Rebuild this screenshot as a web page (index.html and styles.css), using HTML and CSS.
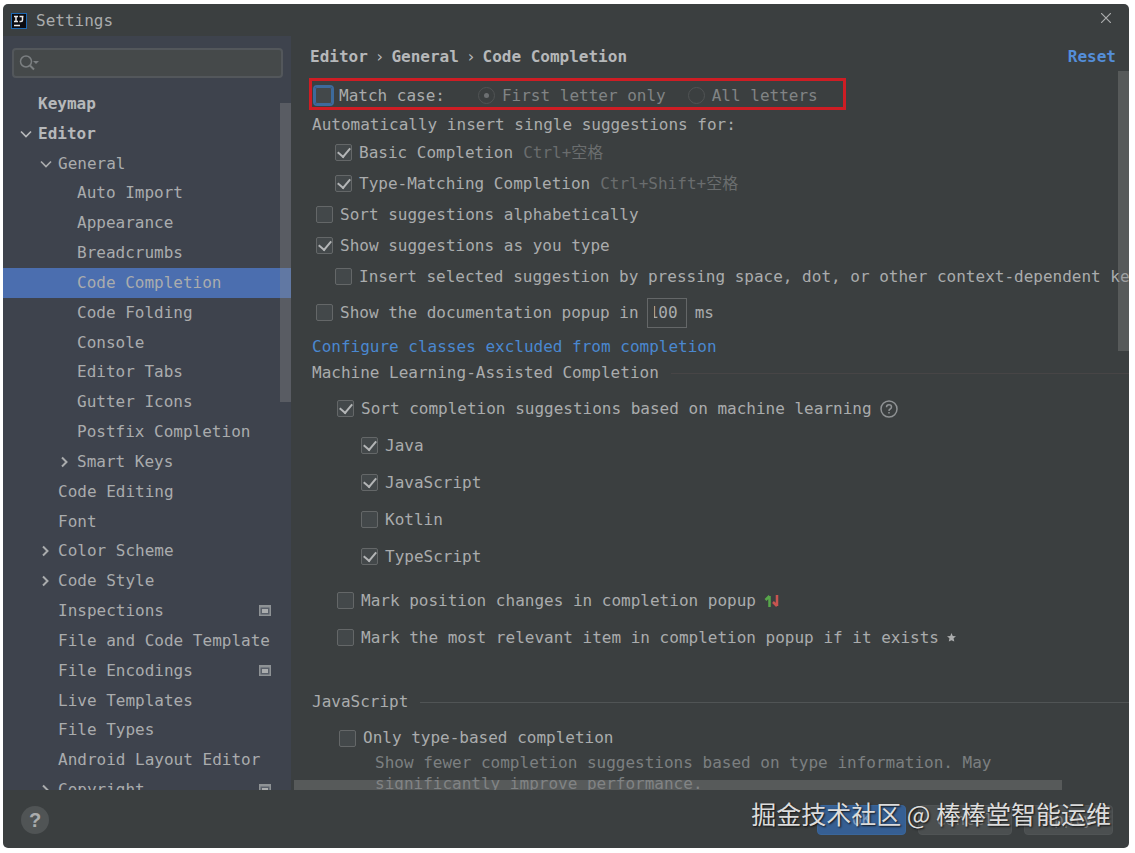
FILE: index.html
```html
<!DOCTYPE html>
<html lang="en">

<head>
    <meta charset="UTF-8">
    <meta name="viewport" content="width=device-width, initial-scale=1.0">
    <title>Settings</title>
    <link rel="stylesheet" href="styles.css">
</head>

<body>
    <!-- shared icons -->
    <svg class="sprite" aria-hidden="true">
        <symbol id="right" viewBox="0 0 16 16">
            <path d="M5 3.500l4.500 4.500L5 12.500" fill="none" stroke="currentColor" stroke-width="2" />
        </symbol>
        <symbol id="down" viewBox="0 0 16 16">
            <path d="M3 5.500l5 5 5-5" fill="none" stroke="currentColor" stroke-width="1.700" />
        </symbol>
        <symbol id="project" viewBox="0 0 12 12">
            <path d="M0 0h12v11H0z" fill="currentColor" fill-opacity=".75" />
            <path d="M1.500 2.500h9v7h-9z" fill="#5a606a" />
            <path d="M3 4h6v4H3z" fill="currentColor" />
        </symbol>
    </svg>

    <div class="dialog">
        <header class="titlebar">
            <svg class="logo" viewBox="0 0 16 16" aria-hidden="true">
                <rect width="16" height="16" fill="#1d68b3" />
                <rect x="1" y="1" width="14" height="14" fill="#0b0b10" />
                <path d="M3 3.500h4M5 3.500v5M3 8.500h4M8.500 3.500h4M11.500 3.500v3.500q0 1.500-1.500 1.500H8.500M3 12.500h6" fill="none" stroke="#e8e8e8" stroke-width="1.500" />
            </svg>
            <span>Settings</span>
            <button class="close" aria-label="Close">
                <svg viewBox="0 0 10 10"><path d="M0 0l10 10M10 0L0 10" stroke="currentColor" stroke-width="1.200" /></svg>
            </button>
        </header>

        <div class="body">
            <nav class="sidebar">
                <label class="search">
                    <svg viewBox="0 0 22 18" aria-hidden="true">
                        <circle cx="7" cy="7.500" r="5.500" fill="none" stroke="currentColor" stroke-width="1.500" />
                        <path d="M11 11.500l4 4" stroke="currentColor" stroke-width="2" />
                        <path d="M14 7h6l-3 3z" fill="currentColor" />
                    </svg>
                    <input type="text" aria-label="Search settings">
                </label>
                <ul class="tree">
                    <li><a class="top" href="#"><i></i>Keymap</a></li>
                    <li><a class="top" href="#"><svg><use href="#down" /></svg>Editor</a></li>
                    <li><a class="group" href="#"><svg><use href="#down" /></svg>General</a></li>
                    <li><a class="leaf" href="#"><i></i>Auto Import</a></li>
                    <li><a class="leaf" href="#"><i></i>Appearance</a></li>
                    <li><a class="leaf" href="#"><i></i>Breadcrumbs</a></li>
                    <li><a class="leaf selected" href="#"><i></i>Code Completion</a></li>
                    <li><a class="leaf" href="#"><i></i>Code Folding</a></li>
                    <li><a class="leaf" href="#"><i></i>Console</a></li>
                    <li><a class="leaf" href="#"><i></i>Editor Tabs</a></li>
                    <li><a class="leaf" href="#"><i></i>Gutter Icons</a></li>
                    <li><a class="leaf" href="#"><i></i>Postfix Completion</a></li>
                    <li><a class="leaf" href="#"><svg><use href="#right" /></svg>Smart Keys</a></li>
                    <li><a class="group" href="#"><i></i>Code Editing</a></li>
                    <li><a class="group" href="#"><i></i>Font</a></li>
                    <li><a class="group" href="#"><svg><use href="#right" /></svg>Color Scheme</a></li>
                    <li><a class="group" href="#"><svg><use href="#right" /></svg>Code Style</a></li>
                    <li><a class="group" href="#"><i></i>Inspections<svg class="project"><use href="#project" /></svg></a></li>
                    <li><a class="group" href="#"><i></i>File and Code Template</a></li>
                    <li><a class="group" href="#"><i></i>File Encodings<svg class="project"><use href="#project" /></svg></a></li>
                    <li><a class="group" href="#"><i></i>Live Templates</a></li>
                    <li><a class="group" href="#"><i></i>File Types</a></li>
                    <li><a class="group" href="#"><i></i>Android Layout Editor</a></li>
                    <li><a class="group" href="#"><svg><use href="#right" /></svg>Copyright<svg class="project"><use href="#project" /></svg></a></li>
                </ul>
                <div class="thumb tree-thumb"></div>
            </nav>

            <main class="content">
                <div class="crumbs">
                    <span>Editor</span><span class="sep">›</span><span>General</span><span class="sep">›</span><span>Code Completion</span>
                    <a class="reset" href="#">Reset</a>
                </div>

                <div class="match">
                    <label><input class="focused" type="checkbox">Match case:</label>
                    <label class="disabled first"><input type="radio" name="match" checked disabled>First letter only</label>
                    <label class="disabled"><input type="radio" name="match" disabled>All letters</label>
                </div>

                <p class="caption">Automatically insert single suggestions for:</p>
                <div class="rows">
                    <label class="indent"><input type="checkbox" checked>Basic Completion <kbd>Ctrl+空格</kbd></label>
                    <label class="indent"><input type="checkbox" checked>Type-Matching Completion <kbd>Ctrl+Shift+空格</kbd></label>
                    <label><input type="checkbox">Sort suggestions alphabetically</label>
                    <label><input type="checkbox" checked>Show suggestions as you type</label>
                    <label class="indent"><input type="checkbox">Insert selected suggestion by pressing space, dot, or other context-dependent keys</label>
                </div>
                <div class="delay">
                    <label><input type="checkbox">Show the documentation popup in</label>
                    <input type="text" value="100" aria-label="Delay in milliseconds">
                    <span>ms</span>
                </div>
                <a class="configure" href="#">Configure classes excluded from completion</a>

                <h2 class="faint">Machine Learning-Assisted Completion</h2>
                <div class="rows ml">
                    <label>
                        <input type="checkbox" checked>Sort completion suggestions based on machine learning
                        <svg class="hint" viewBox="0 0 18 18" aria-hidden="true">
                            <circle cx="9" cy="9" r="8" fill="none" stroke="currentColor" stroke-width="1.500" />
                            <path d="M6.500 7.200q0-2.400 2.500-2.400t2.500 2.200q0 1.200-1.300 2-1.200.7-1.200 2M9 12v1.600" fill="none" stroke="currentColor" stroke-width="1.500" />
                        </svg>
                    </label>
                    <label class="lang"><input type="checkbox" checked>Java</label>
                    <label class="lang"><input type="checkbox" checked>JavaScript</label>
                    <label class="lang"><input type="checkbox">Kotlin</label>
                    <label class="lang"><input type="checkbox" checked>TypeScript</label>
                </div>
                <div class="rows ml marks">
                    <label>
                        <input type="checkbox">Mark position changes in completion popup
                        <svg class="updown" viewBox="0 0 16 14" aria-hidden="true">
                            <path d="M5.500 13V2M1.500 6l4-4" fill="none" stroke="#57a64a" stroke-width="2.500" />
                            <path d="M13 1v11M9 8l4 4" fill="none" stroke="#c75450" stroke-width="2.500" />
                        </svg>
                    </label>
                    <label>
                        <input type="checkbox">Mark the most relevant item in completion popup if it exists
                        <svg class="star" viewBox="0 0 10 10" aria-hidden="true">
                            <path d="M5 0l1.400 3.200 3.600.4-2.700 2.300.8 3.600L5 8 2 9.500l.7-3.600L0 3.600l3.600-.4z" fill="currentColor" />
                        </svg>
                    </label>
                </div>

                <h2>JavaScript</h2>
                <div class="rows js">
                    <label><input type="checkbox">Only type-based completion</label>
                    <p>Show fewer completion suggestions based on type information. May<br>significantly improve performance.</p>
                </div>

                <div class="thumb page-thumb"></div>
                <div class="thumb bottom-thumb"></div>
            </main>
        </div>

        <footer class="footer">
            <button class="help" aria-label="Help">?</button>
            <button class="btn primary">OK</button>
            <button class="btn">Cancel</button>
            <button class="btn">Apply</button>
            <div class="watermark">掘金技术社区 @ 棒棒堂智能运维</div>
        </footer>
    </div>
</body>

</html>
```

FILE: styles.css
```css
* {
    box-sizing: border-box;
}

body {
    margin: 0;
    padding: 4px 6px 5px 3px;
    background-color: #fff;
    color: #aaacad;
    font-family: "DejaVu Sans Mono", "Noto Sans CJK SC", monospace;
    font-size: 16px;
    line-height: 20px;
}

a {
    color: inherit;
    text-decoration: none;
}

button,
input {
    font: inherit;
    color: inherit;
}

.sprite {
    display: none;
}

.dialog {
    display: flex;
    flex-direction: column;
    height: calc(100vh - 9px);
    border-radius: 5px;
    overflow: hidden;
    background-color: #3b3f40;
}

/* title bar */
.titlebar {
    display: flex;
    align-items: center;
    gap: 9px;
    height: 32px;
    padding: 1px 18px 0 8px;
}

.logo {
    width: 16px;
    height: 16px;
}

.close {
    display: flex;
    margin-left: auto;
    padding: 0 0 6px;
    border: 0;
    background: none;
}

.close svg {
    width: 10px;
    height: 10px;
}

.body {
    display: flex;
    flex: 1;
    min-height: 0;
}

/* sidebar */
.sidebar {
    position: relative;
    display: flex;
    flex-direction: column;
    flex: 0 0 288px;
    padding-top: 12px;
    overflow: hidden;
    background-color: #3e434d;
}

.search {
    display: flex;
    align-items: center;
    height: 30px;
    margin: 0 8px 11px 9px;
    padding: 0 5px;
    border: 2px solid #53575b;
    border-radius: 4px;
    background-color: #45494a;
    color: #7b7f81;
}

.search svg {
    flex: none;
    width: 22px;
    height: 18px;
}

.search input {
    flex: 1;
    min-width: 0;
    border: 0;
    outline: 0;
    background: none;
}

/* the last row is cut off by the footer */
.tree {
    flex: 1;
    display: grid;
    grid-auto-rows: minmax(28px, 1fr);
    margin: 0 0 -15px;
    padding: 0;
    list-style: none;
}

.tree a {
    display: flex;
    align-items: center;
    gap: 4px;
    height: 100%;
    padding: 0 20px 0 35px;
    white-space: nowrap;
}

.tree i,
.tree svg {
    flex: none;
    width: 16px;
    height: 16px;
}

.tree .top {
    padding-left: 15px;
    font-weight: bold;
    color: #b6b8ba;
}

.tree .leaf {
    padding-left: 54px;
}

.tree .selected {
    background-color: #4b6eaf;
}

.tree .project {
    width: 12px;
    height: 12px;
    margin-left: auto;
}

.thumb {
    position: absolute;
    background-color: rgba(140, 140, 140, 0.35);
}

.tree-thumb {
    top: 67px;
    right: 0;
    width: 11px;
    height: 299px;
}

/* settings page */
.content {
    position: relative;
    display: flex;
    flex-direction: column;
    flex: 1;
    min-width: 0;
    padding-left: 21px;
    overflow: hidden;
    white-space: nowrap;
}

.content > * {
    flex-shrink: 0;
}

.crumbs {
    display: flex;
    align-items: center;
    height: 42px;
    padding-right: 13px;
    margin-left: -2px;
    font-weight: bold;
    color: #b6b8ba;
}

.sep {
    margin: 0 7px;
    font-weight: normal;
}

.reset {
    margin-left: auto;
    color: #548ed9;
}

label {
    display: flex;
    align-items: center;
}

input[type="checkbox"],
input[type="radio"] {
    appearance: none;
    display: grid;
    place-items: center;
    flex: none;
    width: 17px;
    height: 17px;
    margin: 0 7px 0 0;
    border: 1px solid #646768;
    border-radius: 2px;
    background-color: #43484a;
}

input[type="checkbox"]:checked::before {
    content: "";
    width: 6px;
    height: 10px;
    margin-bottom: 4px;
    border: solid #b4b6b7;
    border-width: 0 2px 2px 0;
    transform: rotate(40deg);
}

input[type="checkbox"].focused {
    border-color: #3d6a9c;
    outline: 2px solid #3d6a9c;
}

input[type="radio"] {
    border-color: #505354;
    border-radius: 50%;
    background: none;
}

input[type="radio"]:checked::before {
    content: "";
    width: 5px;
    height: 5px;
    border-radius: 50%;
    background-color: #6d7072;
}

.match {
    display: flex;
    align-items: center;
    gap: 22px;
    align-self: flex-start;
    height: 32px;
    margin-left: -3px;
    padding: 3px 25px 0 3px;
    border: 3px solid #ce1d24;
}

.match .first {
    margin-left: 11px;
}

.disabled {
    color: #818485;
}

.caption {
    margin: 0;
    padding: 5px 0 2px;
}

.rows label {
    height: 31px;
    margin-left: 4px;
}

.rows .indent {
    margin-left: 23px;
}

kbd {
    margin-left: 10px;
    font-family: inherit;
    color: #6a6d6e;
}

.delay {
    display: flex;
    align-items: center;
    gap: 8px;
    height: 41px;
    margin-left: 4px;
}

/* value keeps its last digits in view when the field is too narrow */
.delay input[type="text"] {
    width: 40px;
    height: 30px;
    padding: 0 8px 0 6px;
    border: 1px solid #646768;
    outline: 0;
    background-color: #3b3f40;
    direction: rtl;
}

.configure {
    padding: 4px 0;
    color: #4a88d0;
}

h2 {
    display: flex;
    align-items: center;
    gap: 12px;
    height: 24px;
    margin: 0;
    font-size: 16px;
    font-weight: normal;
}

h2::after {
    content: "";
    flex: 1;
    height: 1px;
    background-color: #505455;
}

h2.faint::after {
    background-color: #474546;
}

.ml {
    padding: 5px 0 0 21px;
}

.ml label {
    height: 37px;
}

.rows.ml .lang {
    margin-left: 28px;
}

.marks {
    padding: 7px 0 34px 21px;
}

.hint {
    width: 18px;
    height: 18px;
    margin-left: 8px;
    color: #8f9294;
}

.updown {
    width: 16px;
    height: 14px;
    margin-left: 8px;
}

.star {
    width: 9px;
    height: 9px;
    margin-left: 8px;
}

.js {
    padding: 10px 0 0 23px;
}

.js label {
    height: 28px;
}

.js p {
    margin: 0 0 0 40px;
    line-height: 21px;
    color: #7c7f80;
}

.page-thumb {
    top: 35px;
    right: 0;
    width: 11px;
    height: 280px;
}

.bottom-thumb {
    left: 3px;
    right: 67px;
    bottom: 0;
    height: 10px;
}

/* footer */
.footer {
    position: relative;
    display: flex;
    align-items: center;
    gap: 12px;
    height: 58px;
    padding: 2px 16px 0 18px;
}

.help {
    width: 28px;
    height: 28px;
    margin-right: auto;
    padding: 0;
    border: 0;
    border-radius: 50%;
    background-color: #505455;
    font-family: "Liberation Sans", sans-serif;
    font-size: 20px;
    font-weight: bold;
}

.btn {
    min-width: 89px;
    height: 30px;
    padding: 0 17px;
    border: 1px solid #505455;
    border-radius: 4px;
    background-color: #4b4f50;
    color: #7c7f80;
}

.btn.primary {
    border-color: #3a669a;
    background-color: #365f93;
    color: #7f9cc0;
}

.watermark {
    position: absolute;
    right: 18px;
    top: 5px;
    font-family: "Noto Sans CJK SC", sans-serif;
    font-size: 25px;
    line-height: 36px;
    color: #dcdcdc;
    text-shadow: 1px 1px 2px #111;
    white-space: nowrap;
    pointer-events: none;
}
```
